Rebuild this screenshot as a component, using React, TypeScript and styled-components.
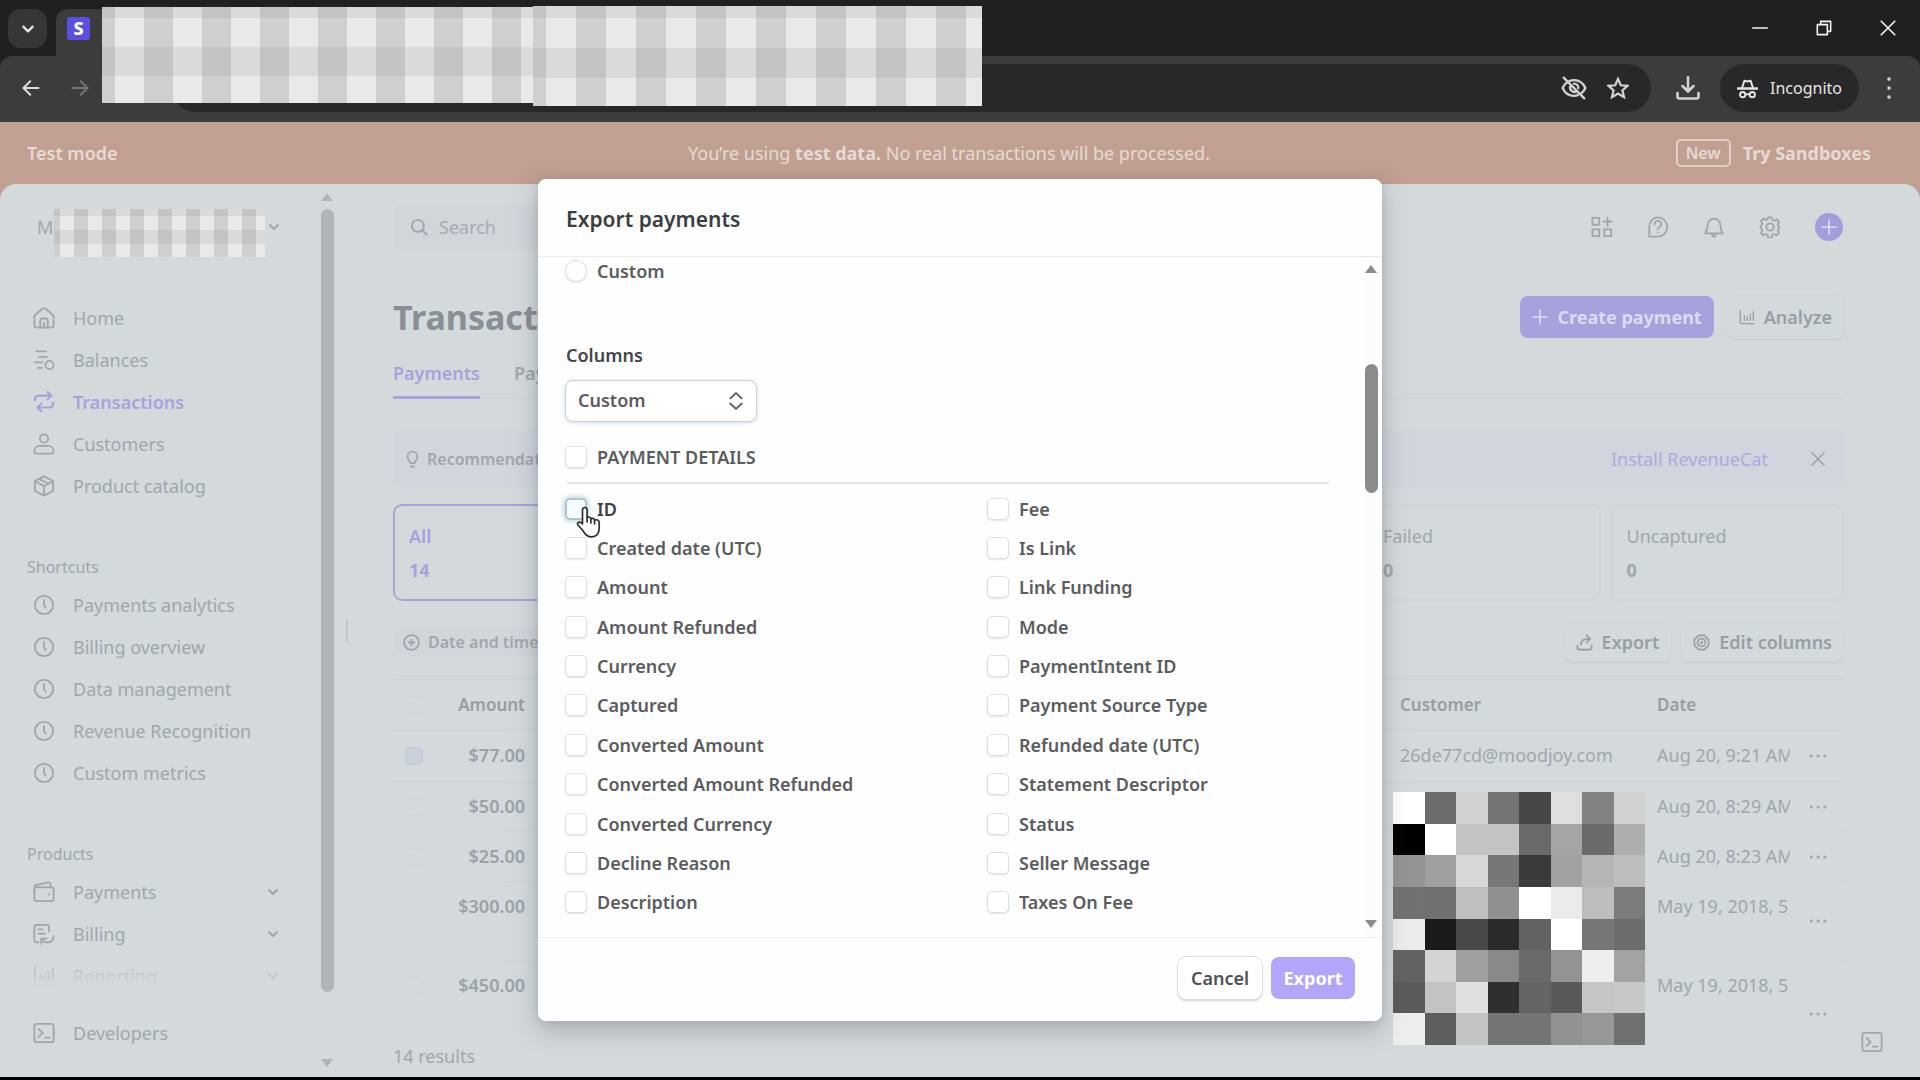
import React from "react";
import styled, { createGlobalStyle, css } from "styled-components";

const GlobalStyle = createGlobalStyle`
  * { box-sizing: border-box; }
  body {
    margin: 0;
    background: #000;
    font-family: "Noto Sans", "Open Sans", "Liberation Sans", sans-serif;
    font-size: 18px;
    color: #a1a6ad;
  }
  button, input, select { font: inherit; color: inherit; }
  button { border: 0; padding: 0; background: none; cursor: pointer; }
  a { color: inherit; text-decoration: none; }
  h1, h2, p, ul { margin: 0; padding: 0; }
  ul { list-style: none; }
`;

/* ---------- icons ---------- */

type IconProps = { size?: number; stroke?: number; children: React.ReactNode };

const Glyph = styled.svg`
  display: block;
  flex: none;
  fill: none;
  stroke: currentColor;
  stroke-linecap: round;
  stroke-linejoin: round;
`;

const Icon = ({ size = 22, stroke = 2, children }: IconProps) => (
  <Glyph width={size} height={size} viewBox="0 0 24 24" strokeWidth={stroke} aria-hidden="true">
    {children}
  </Glyph>
);

const ChevronDown = ({ size = 12, stroke = 4 }) => (
  <Icon size={size} stroke={stroke}><path d="M4 8l8 8 8-8" /></Icon>
);
const HomeIcon = () => (
  <Icon><path d="M1.500 9.500L9.500 2.500a4 4 0 0 1 5 0l8 7V20a2.500 2.500 0 0 1-2.500 2.500H4A2.500 2.500 0 0 1 1.500 20z" /><path d="M8 22v-7a2.500 2.500 0 0 1 2.500-2.500h3A2.500 2.500 0 0 1 16 15v7M12 17v5" /></Icon>
);
const BalancesIcon = () => (
  <Icon><path d="M3 2.500h11M6 8.500h9M2 14.500h8M5 20.500h5" /><circle cx="18" cy="17.500" r="4.500" /></Icon>
);
const TransactionsIcon = () => (
  <Icon stroke={2.4}><path d="M2 10c0-3 1-5 4-5h14M16 1l4 4-4 4M22 13c0 3-1 5-4 5H5M9 14l-4 4 4 4" /></Icon>
);
const CustomerIcon = () => (
  <Icon><circle cx="12" cy="6" r="4.500" /><path d="M1.500 20c0-3.500 2.500-6 6-6h9c3.500 0 6 2.500 6 6 0 1.500-.6 2.500-2 2.500h-17c-1.400 0-2-1-2-2.500z" /></Icon>
);
const CatalogIcon = () => (
  <Icon><path d="M12 1.500l10 5v11l-10 5-10-5v-11zM2.500 7l9.500 5 9.500-5M12 12v10M7 4.500l10 5" /></Icon>
);
const ClockIcon = () => (
  <Icon><circle cx="12" cy="12" r="10" /><path d="M12 6.500v6l2 2.500" /></Icon>
);
const WalletIcon = () => (
  <Icon><path d="M1.500 9a2 2 0 0 1 2-2h17a2 2 0 0 1 2 2v11a2 2 0 0 1-2 2h-17a2 2 0 0 1-2-2zM1.500 9V6.500a2 2 0 0 1 2-2l13-3a2 2 0 0 1 2.500 2V7M17 14.500h1" /></Icon>
);
const BillingIcon = () => (
  <Icon><path d="M6 21H4a2.500 2.500 0 0 1-2.500-2.500v-14A2.500 2.500 0 0 1 4 2h11a2.500 2.500 0 0 1 2.500 2.500V9M6 7h4M6 11.500h7M9 23v-6h6M9.500 17.500C13 23 22 23 22.500 14" /></Icon>
);
const ReportIcon = ({ size = 22 }) => (
  <Icon size={size}><path d="M2 2v18a2 2 0 0 0 2 2h18M8 10v7M12.500 12v5M17 8v9M21.500 4v13" /></Icon>
);
const TerminalIcon = () => (
  <Icon><rect x="1.500" y="2" width="21" height="20" rx="2.500" /><path d="M6 7.500l4.500 4.500L6 16.500M13 17h5" /></Icon>
);
const SearchIcon = () => (
  <Icon size={18} stroke={2.6}><circle cx="10.500" cy="10.500" r="8" /><path d="M16.500 16.500L22 22" /></Icon>
);
const AppsIcon = () => (
  <Icon><rect x="1.500" y="2" width="7.500" height="7.500" /><rect x="1.500" y="14.500" width="7.500" height="7.500" /><rect x="14.500" y="14.500" width="7.500" height="7.500" /><path d="M18 1.500v9M13.500 6h9" /></Icon>
);
const HelpIcon = () => (
  <Icon><path d="M2.500 22.500V12A9.800 9.800 0 0 1 12 1.500c5.500 0 10 4.500 10 10.500s-4.500 10.500-10 10.500z" /><path d="M8.500 9a3.500 3.500 0 1 1 5 3c-1 .5-1.500 1-1.500 2.500M12 18v.2" /></Icon>
);
const BellIcon = () => (
  <Icon><path d="M2.500 19c2-3 2.500-5 2.500-9a7 7 0 0 1 14 0c0 4 .5 6 2.500 9zM9.500 20l2.500 3 2.500-3" /></Icon>
);
const GearIcon = ({ size = 22 }) => (
  <Icon size={size}>
    <path d="M10 1.500h4l.6 2.900 2 .9 2.600-1.500 2.700 2.700-1.500 2.600.8 2 1.300.9-1.300 1.900-.8 2 1.500 2.600-2.700 2.700-2.600-1.500-2 .9-.6 2.900h-4l-.6-2.900-2-.9-2.600 1.500-2.700-2.700 1.500-2.600-.8-2L1.500 12l1.300-1.900.8-2-1.500-2.600 2.700-2.700 2.600 1.500 2-.9z" />
    <circle cx="12" cy="12" r="4" />
  </Icon>
);
const NutIcon = () => (
  <Icon size={17} stroke={2.400}><path d="M8 2h8l3 3 3 3v8l-3 3-3 3H8l-3-3-3-3V8l3-3z" /><circle cx="12" cy="12" r="5.500" /><circle cx="12" cy="12" r="1" /></Icon>
);
const PlusIcon = ({ size = 16, stroke = 2.6 }) => (
  <Icon size={size} stroke={stroke}><path d="M12 1.500v21M1.500 12h21" /></Icon>
);
const PlusCircleIcon = () => (
  <Icon size={17} stroke={2.6}><circle cx="12" cy="12" r="10.500" /><path d="M12 8v8M8 12h8" /></Icon>
);
const BulbIcon = () => (
  <Icon size={17} stroke={2.4}><path d="M9 17c0-3-4-4-4-9a7 7 0 0 1 14 0c0 5-4 6-4 9zM9.500 22h5" /></Icon>
);
const CloseIcon = ({ size = 16, stroke = 2.600 }) => (
  <Icon size={size} stroke={stroke}><path d="M3 3l18 18M21 3L3 21" /></Icon>
);
const ShareIcon = () => (
  <Icon size={17} stroke={2.4}><path d="M2 16v3.500A2.500 2.500 0 0 0 4.500 22h15a2.500 2.500 0 0 0 2.500-2.500V16M7 15c0-6 3-8 13-8M15 2l5 5-5 5" /></Icon>
);
const DotsIcon = () => (
  <Icon size={18} stroke={4}><path d="M3 12h.1M12 12h.1M21 12h.1" /></Icon>
);
const UpDownIcon = () => (
  <Icon size={18} stroke={2.600}><path d="M4.500 8.500L12 1.500l7.500 7M4.500 15.500l7.500 7 7.500-7" /></Icon>
);

/* ---------- browser frame ---------- */

const Screen = styled.div`
  display: flex;
  flex-direction: column;
  height: 100vh;
  padding-bottom: 3px;
  overflow: hidden;
  background: #000;
`;

const Browser = styled.header`
  position: relative;
  flex: none;
  background: #202020;
  color: #e3e3e3;
`;

const TabStrip = styled.div`
  display: flex;
  height: 56px;
`;

const TabMenu = styled.button`
  display: grid;
  place-items: center;
  width: 39px;
  height: 39px;
  margin: 9px 9px 0 8px;
  border-radius: 13px;
  background: #363636;
`;

const ActiveTab = styled.div`
  flex: 0 0 600px;
  height: 47px;
  margin-top: 9px;
  padding: 8px 11px;
  border-radius: 12px 12px 0 0;
  background: #3c3c3c;
`;

const Favicon = styled.span`
  display: grid;
  place-items: center;
  width: 23px;
  height: 23px;
  border-radius: 3px;
  background: #5b4fe0;
  color: #fff;
  font-size: 18px;
  font-weight: 800;
  line-height: 23px;
`;

const WindowButtons = styled.div`
  display: flex;
  margin-left: auto;
`;

const WindowButton = styled.button`
  display: grid;
  place-items: center;
  width: 64px;
  height: 56px;
  color: #f2f2f2;
`;

const Toolbar = styled.div`
  display: flex;
  align-items: center;
  height: 66px;
  padding: 0 19px 2px 18px;
  border-radius: 12px 12px 0 0;
  background: #3c3c3c;
`;

const NavButton = styled.button<{ $dim?: boolean }>`
  display: grid;
  place-items: center;
  width: 26px;
  height: 40px;
  margin-right: 23px;
  color: ${(p) => (p.$dim ? "#747474" : "#dedede")};
`;

const AddressBar = styled.div`
  display: flex;
  flex: 1;
  align-items: center;
  justify-content: flex-end;
  gap: 21px;
  height: 48px;
  margin-left: 56px;
  padding-right: 21px;
  border-radius: 24px;
  background: #282828;
  color: #cfcfcf;
`;

const ToolButton = styled.button`
  display: grid;
  place-items: center;
  width: 24px;
  height: 32px;
  color: #d2d2d2;
`;

const DownloadSlot = styled.div`
  margin: 0 20px 0 25px;
`;

const Incognito = styled.button`
  display: flex;
  align-items: center;
  gap: 12px;
  height: 48px;
  margin-right: 18px;
  padding: 0 17px;
  border-radius: 24px;
  background: #282828;
  color: #e6e6e6;
  font-size: 16px;
`;

const Check = styled.div<{ $left: number; $top: number; $width: number; $height: number; $shift: number; $period: number; $band: number; $rise: number }>`
  position: absolute;
  z-index: 2;
  left: ${(p) => p.$left}px;
  top: ${(p) => p.$top}px;
  width: ${(p) => p.$width}px;
  height: ${(p) => p.$height}px;
  background:
    repeating-linear-gradient(180deg,
      rgba(120, 120, 120, 0.13) 0 ${(p) => p.$band}px,
      transparent ${(p) => p.$band}px ${(p) => p.$band * 2}px) 0 ${(p) => -p.$rise}px / 100% 200px,
    repeating-linear-gradient(90deg,
      #cfcfcf 0 ${(p) => p.$period / 2}px,
      #e9e9e9 ${(p) => p.$period / 2}px ${(p) => p.$period}px) ${(p) => p.$shift}px 0 / ${(p) => p.$period}px 100%;
`;

/* ---------- page ---------- */

const Viewport = styled.div`
  position: relative;
  display: flex;
  flex: 1;
  flex-direction: column;
  min-height: 0;
  background: #c1a092;
`;

const TestBanner = styled.div`
  display: grid;
  grid-template-columns: 1fr auto 1fr;
  align-items: center;
  flex: none;
  height: 62px;
  padding: 0 49px 0 27px;
  color: #e6dad5;
  strong { font-weight: 700; }
`;

const BannerTitle = styled.span`
  font-weight: 600;
`;

const BannerSide = styled.div`
  display: flex;
  align-items: center;
  justify-content: flex-end;
  gap: 12px;
  font-weight: 700;
`;

const NewBadge = styled.span`
  padding: 0 8px;
  border: 2px solid #e0d0ca;
  border-radius: 5px;
  font-size: 16px;
  font-weight: 600;
  line-height: 24px;
`;

const Page = styled.div`
  display: flex;
  flex: 1;
  min-height: 0;
  border-radius: 16px 16px 0 0;
  background: #d4d9dc;
`;

const Sidebar = styled.aside`
  display: flex;
  flex: 0 0 346px;
  padding-right: 12px;
`;

const SideContent = styled.nav`
  flex: 1;
  padding: 22px 38px 22px 27px;
`;

const Account = styled.button`
  display: flex;
  align-items: center;
  justify-content: space-between;
  width: 100%;
  height: 42px;
  margin-bottom: 49px;
  padding: 0 2px 0 10px;
`;

const SideLabel = styled.h2`
  margin-top: 43px;
  font-size: 16px;
  font-weight: 400;
  line-height: 34px;
`;

const SideLink = styled.a<{ $active?: boolean; $faded?: boolean; $gap?: boolean }>`
  display: flex;
  align-items: center;
  gap: 18px;
  height: 42px;
  margin-top: ${(p) => (p.$gap ? 15 : 0)}px;
  padding: 0 3px 0 6px;
  white-space: nowrap;
  ${(p) => p.$active && css`color: #a8a2dc; font-weight: 600;`}
  ${(p) => p.$faded && css`
    opacity: 0.6;
    mask-image: linear-gradient(#000 25%, transparent 75%);
  `}
  > :nth-child(3) { margin-left: auto; }
`;

const ScrollBar = styled.div<{ $tone: string }>`
  display: flex;
  flex: 0 0 14px;
  flex-direction: column;
  align-items: center;
  color: ${(p) => p.$tone};
`;

const ScrollTrack = styled.div`
  flex: 1;
  width: 13px;
  min-height: 0;
`;

const ScrollThumb = styled.div<{ $size: number }>`
  height: ${(p) => p.$size}%;
  border-radius: 7px;
  background: currentColor;
`;

const ScrollSpace = styled.div`
  height: 14%;
`;

const Arrow = styled.svg`
  display: block;
  fill: currentColor;
`;

const ArrowMark = ({ down = false }: { down?: boolean }) => (
  <Arrow width="12" height="8" viewBox="0 0 12 8" aria-hidden="true">
    <path d={down ? "M0 0h12L6 8z" : "M0 8h12L6 0z"} />
  </Arrow>
);

const SideScroll = styled(ScrollBar)`
  padding: 9px 0 10px;
  gap: 8px;
`;

const Handle = styled.div`
  align-self: center;
  flex: none;
  width: 2px;
  height: 22px;
  background: #bfc4c9;
`;

const Main = styled.main`
  display: flex;
  flex: 1;
  flex-direction: column;
  min-width: 0;
  padding: 0 76px 0 45px;
`;

const TopBar = styled.div`
  display: flex;
  align-items: center;
  justify-content: space-between;
  flex: none;
  height: 86px;
`;

const SearchBox = styled.label`
  display: flex;
  align-items: center;
  gap: 11px;
  width: 480px;
  height: 44px;
  padding: 0 17px;
  border-radius: 8px;
  background: #d2d6db;
  input {
    flex: 1;
    padding: 0;
    border: 0;
    outline: 0;
    background: none;
  }
  input::placeholder { color: #a6abb1; opacity: 1; }
`;

const TopActions = styled.div`
  display: flex;
  align-items: center;
  gap: 34px;
  padding-right: 1px;
`;

const AddButton = styled.button`
  display: grid;
  place-items: center;
  width: 28px;
  height: 28px;
  border-radius: 50%;
  background: #a39edb;
  color: #dcdcf2;
`;

const TitleRow = styled.div`
  display: flex;
  align-items: center;
  flex: none;
  gap: 13px;
  height: 44px;
  margin-top: 25px;
  h1 {
    margin-right: auto;
    color: #8a8f95;
    font-size: 34px;
    font-weight: 700;
    line-height: 44px;
  }
`;

const PrimaryButton = styled.button`
  display: flex;
  align-items: center;
  gap: 9px;
  height: 42px;
  padding: 0 12px;
  border-radius: 8px;
  background: #a6a2dd;
  color: #dcdbf0;
  font-weight: 700;
`;

const PlainButton = styled.button<{ $small?: boolean }>`
  display: flex;
  align-items: center;
  gap: 9px;
  height: ${(p) => (p.$small ? 38 : 42)}px;
  padding: 0 12px;
  border-radius: 8px;
  box-shadow: 0 0 0 1px #d1d5d9, 0 2px 2px #c9cdd1;
  color: #999ea5;
  font-weight: 600;
`;

const Tabs = styled.nav`
  display: flex;
  flex: none;
  gap: 34px;
  height: 49px;
  margin-top: 11px;
  box-shadow: inset 0 -1px #cdd2d6;
  font-weight: 600;
`;

const Tab = styled.a<{ $active?: boolean }>`
  border-bottom: 3px solid ${(p) => (p.$active ? "#a8a2dc" : "transparent")};
  color: ${(p) => (p.$active ? "#a8a2dc" : "inherit")};
  line-height: 46px;
`;

const Notice = styled.div`
  display: flex;
  align-items: center;
  flex: none;
  height: 58px;
  margin-top: 31px;
  padding: 0 18px 0 11px;
  gap: 6px;
  border-radius: 8px;
  background: #d1d5dd;
  font-size: 16px;
  font-weight: 600;
  a {
    margin-left: auto;
    padding-right: 36px;
    color: #b0a9dd;
    font-size: 18px;
    font-weight: 400;
  }
`;

const Cards = styled.ul`
  display: grid;
  flex: none;
  grid-template-columns: repeat(6, 1fr);
  gap: 10px;
  margin-top: 16px;
`;

const Card = styled.li<{ $active?: boolean }>`
  height: 97px;
  padding: 13px 14px;
  border: 2px solid ${(p) => (p.$active ? "#a8a4dc" : "#d1d5d9")};
  border-radius: 9px;
  color: ${(p) => (p.$active ? "#a8a2dc" : "inherit")};
  line-height: 34px;
  font-weight: ${(p) => (p.$active ? 600 : 400)};
  strong { display: block; font-weight: 700; }
`;

const FilterRow = styled.div`
  display: flex;
  align-items: center;
  flex: none;
  gap: 10px;
  margin-top: 22px;
`;

const FilterChip = styled.button`
  display: flex;
  align-items: center;
  gap: 8px;
  height: 28px;
  margin-right: auto;
  padding: 0 10px;
  border-radius: 14px;
  background: #d2d6db;
  font-size: 16px;
  font-weight: 600;
`;

const TableArea = styled.div`
  flex: 1;
  min-height: 0;
  margin-top: 18px;
  overflow: hidden;
  border-top: 1px solid #ccd0d4;
`;

const Table = styled.table`
  width: 100%;
  table-layout: fixed;
  border-spacing: 0;
  th, td {
    height: 51px;
    padding: 0;
    border-bottom: 1px solid #cfd3d6;
    line-height: 49px;
    text-align: left;
    vertical-align: top;
    white-space: nowrap;
  }
  th { color: #999da3; font-size: 17px; font-weight: 600; line-height: 50px; }
`;

const Row = styled.tr<{ $height: number }>`
  td { height: ${(p) => p.$height}px; }
`;

const Col = styled.col<{ $width?: number }>`
  width: ${(p) => (p.$width ? p.$width + "px" : "auto")};
`;

const AmountHead = styled.th`
  && { text-align: right; }
`;

const Amount = styled.td`
  && { text-align: right; }
  color: #9ca1a7;
  font-weight: 600;
`;

const DateCell = styled.td`
  overflow: hidden;
`;

const MenuCell = styled.td`
  && { vertical-align: middle; }
  button { display: block; margin: 0 0 0 19px; }
`;

const RowCheck = styled.input<{ $hot?: boolean }>`
  appearance: none;
  display: block;
  width: 18px;
  height: 18px;
  margin: 16px 0 0 12px;
  border: 1px solid ${(p) => (p.$hot ? "#c8cddb" : "#d1d5d9")};
  border-radius: 4px;
  background: ${(p) => (p.$hot ? "#cbd0dc" : "#d5d9dd")};
`;

const Results = styled.p`
  flex: none;
  height: 42px;
  line-height: 42px;
`;

const Mosaic = styled.div`
  position: absolute;
  right: 275px;
  bottom: 32px;
  display: grid;
  grid-template-columns: repeat(8, 1fr);
  grid-template-rows: repeat(8, 1fr);
  width: 252px;
  height: 253px;
`;

const Tile = styled.i<{ $shade: string }>`
  background: #${(p) => p.$shade};
`;

const Console = styled.button`
  position: absolute;
  right: 37px;
  bottom: 24px;
`;

/* ---------- dialog ---------- */

const Overlay = styled.div`
  position: absolute;
  inset: 0;
  display: flex;
  justify-content: center;
  padding: 57px 24px 56px;
`;

const Dialog = styled.section`
  display: flex;
  flex-direction: column;
  width: 844px;
  border-radius: 8px;
  background: #fefefe;
  box-shadow: 0 10px 26px rgba(70, 75, 90, 0.3), 0 0 8px rgba(70, 75, 90, 0.15);
  color: #5b5c60;
  font-weight: 600;
`;

const DialogHead = styled.header`
  flex: none;
  height: 78px;
  padding: 0 28px;
  border-bottom: 1px solid #ebebed;
  h2 {
    color: #3c3d41;
    font-size: 21px;
    font-weight: 600;
    line-height: 80px;
  }
`;

const DialogBody = styled.div`
  display: flex;
  flex: 1;
  min-height: 0;
`;

const Form = styled.form`
  display: flex;
  flex: 1;
  flex-direction: column;
  padding: 3px 35px 15px 27px;
`;

const Choice = styled.label<{ $hover?: boolean }>`
  position: relative;
  display: flex;
  align-items: center;
  gap: 10px;
  color: ${(p) => (p.$hover ? "#3f4044" : "inherit")};
  line-height: 22px;
`;

const Box = styled.input<{ $focus?: boolean }>`
  appearance: none;
  flex: none;
  width: 22px;
  height: 22px;
  margin: 0;
  border: 1px solid #dedfe2;
  border-radius: ${(p) => (p.type === "radio" ? "50%" : "5px")};
  background: #fff;
  box-shadow: 0 1px 2px #e4e5e8;
  ${(p) => p.$focus && css`
    border: 2px solid #b3c4cc;
    background: #f5fcff;
    box-shadow: 0 0 4px 2px #c5dbe6;
  `}
`;

const FieldLabel = styled.label`
  margin: 61px 0 13px 1px;
  color: #444549;
  line-height: 24px;
`;

const SelectWrap = styled.div`
  position: relative;
  width: 192px;
  margin-bottom: 24px;
  svg { position: absolute; right: 12px; top: 12px; pointer-events: none; }
`;

const Select = styled.select`
  appearance: none;
  display: block;
  width: 100%;
  height: 42px;
  padding: 0 12px 2px;
  border: 1px solid #cbd0d4;
  border-radius: 8px;
  background: #fff;
  box-shadow: 0 1px 4px #cfdfe8;
`;

const Divider = styled.hr`
  align-self: stretch;
  margin: 14px 0 5px 2px;
  border: 0;
  border-top: 2px solid #e6e6e8;
`;

const ColumnGrid = styled.div`
  display: grid;
  flex: 1;
  grid-template-columns: 422px 1fr;
  grid-template-rows: repeat(11, 1fr);
  grid-auto-flow: column;
`;

const Pointer = styled.svg`
  position: absolute;
  z-index: 3;
  left: 11px;
  top: 16px;
`;

const DialogScroll = styled(ScrollBar)`
  margin-right: 4px;
  padding: 8px 0 9px;
  background: #fcfcfc;
`;

const DialogFoot = styled.footer`
  display: flex;
  flex: none;
  align-items: center;
  justify-content: flex-end;
  gap: 9px;
  height: 84px;
  padding: 0 27px 3px;
  border-top: 1px solid #ebebed;
`;

const FootButton = styled.button<{ $primary?: boolean }>`
  min-width: 84px;
  height: 42px;
  border-radius: 8px;
  ${(p) => p.$primary
    ? css`background: #b1a6fa; color: #fff; font-weight: 700;`
    : css`background: #fff; box-shadow: 0 0 0 1px #dcdde1, 0 2px 2px #d2d3d8; color: #505156;`}
`;

/* ---------- data ---------- */

const mainLinks = [
  { label: "Home", icon: <HomeIcon /> },
  { label: "Balances", icon: <BalancesIcon /> },
  { label: "Transactions", icon: <TransactionsIcon />, active: true },
  { label: "Customers", icon: <CustomerIcon /> },
  { label: "Product catalog", icon: <CatalogIcon /> },
];
const shortcuts = ["Payments analytics", "Billing overview", "Data management", "Revenue Recognition", "Custom metrics"];
const products = [
  { label: "Payments", icon: <WalletIcon /> },
  { label: "Billing", icon: <BillingIcon /> },
  { label: "Reporting", icon: <ReportIcon />, faded: true },
];
const payments = [
  { amount: "$77.00", customer: "26de77cd@moodjoy.com", date: "Aug 20, 9:21 AM", height: 51 },
  { amount: "$50.00", customer: "", date: "Aug 20, 8:29 AM", height: 50 },
  { amount: "$25.00", customer: "", date: "Aug 20, 8:23 AM", height: 50 },
  { amount: "$300.00", customer: "", date: "May 19, 2018, 5", height: 79 },
  { amount: "$450.00", customer: "", date: "May 19, 2018, 5", height: 107 },
];
const columns = [
  "ID", "Created date (UTC)", "Amount", "Amount Refunded", "Currency", "Captured", "Converted Amount",
  "Converted Amount Refunded", "Converted Currency", "Decline Reason", "Description",
  "Fee", "Is Link", "Link Funding", "Mode", "PaymentIntent ID", "Payment Source Type",
  "Refunded date (UTC)", "Statement Descriptor", "Status", "Seller Message", "Taxes On Fee",
];
const tiles = [
  "fff 6c6c6c d1d1d1 747474 474747 dedede 828282 d1d1d1",
  "000 fff c4c4c4 c4c4c4 696969 a5a5a5 6b6b6b aeaeae",
  "949494 a0a0a0 d8d8d8 777 3a3a3a a1a1a1 b5b5b5 bdbdbd",
  "727272 707070 bfbfbf 909090 fff ebebeb bdbdbd 7b7b7b",
  "ececec 1b1b1b 484848 2a2a2a 626262 fff 767676 6d6d6d",
  "636363 d4d4d4 a0a0a0 898989 696969 939393 eee a3a3a3",
  "5b5b5b c3c3c3 e0e0e0 2f2f2f 646464 595959 c5c5c5 c8c8c8",
  "eee 5e5e5e c3c3c3 747474 747474 929292 979797 707070",
].join(" ").split(" ");

export default function App() {
  return (
    <Screen>
      <GlobalStyle />
      <Browser>
        <TabStrip>
          <TabMenu aria-label="Search tabs"><ChevronDown size={14} /></TabMenu>
          <ActiveTab><Favicon>S</Favicon></ActiveTab>
          <WindowButtons>
            <WindowButton aria-label="Minimize"><Icon size={16}><path d="M1 12h22" /></Icon></WindowButton>
            <WindowButton aria-label="Restore">
              <Icon size={16} stroke={2.4}><path d="M2 7h15v15H2zM7 6V2h15v15h-4" /></Icon>
            </WindowButton>
            <WindowButton aria-label="Close"><CloseIcon size={18} stroke={2.2} /></WindowButton>
          </WindowButtons>
        </TabStrip>
        <Toolbar>
          <NavButton aria-label="Back"><Icon size={18} stroke={2.6}><path d="M22 12H3M11 3l-9 9 9 9" /></Icon></NavButton>
          <NavButton $dim aria-label="Forward"><Icon size={18} stroke={2.6}><path d="M2 12h19M13 3l9 9-9 9" /></Icon></NavButton>
          <AddressBar>
            <ToolButton aria-label="Third-party cookies blocked">
              <Icon size={26} stroke={2.2}>
                <path d="M8 5.500C9.200 5 10.600 4.700 12 4.700c4.700 0 8.500 2.800 10.500 7.300-.8 1.800-1.900 3.300-3.300 4.500M15.500 18.600c-1.100.4-2.300.7-3.500.7-4.700 0-8.500-2.800-10.500-7.300C2.300 10.100 3.500 8.500 5 7.300M2.500 2.500l19 19M9 9.500a4 4 0 0 0 5.500 5.500M12 8a4 4 0 0 1 4 4" />
              </Icon>
            </ToolButton>
            <ToolButton aria-label="Bookmark this page">
              <Icon size={22} stroke={2.4}><path d="M12 2l3 7 7.500.6-5.700 5 1.800 7.400L12 18l-6.600 4 1.800-7.400-5.700-5L9 9z" strokeLinejoin="miter" /></Icon>
            </ToolButton>
          </AddressBar>
          <DownloadSlot>
            <ToolButton aria-label="Downloads">
              <Icon size={24} stroke={2.6}><path d="M12 1v14M6.500 10l5.500 5.500 5.500-5.500M1.500 17v3.500a2 2 0 0 0 2 2h17a2 2 0 0 0 2-2V17" /></Icon>
            </ToolButton>
          </DownloadSlot>
          <Incognito>
            <Icon size={21} stroke={2.2}>
              <path d="M1 12h22" strokeWidth="2.800" />
              <path d="M6 10.500L8.500 3l3.500 1 3.500-1L18 10.500" />
              <circle cx="6.500" cy="19" r="3" /><circle cx="17.500" cy="19" r="3" /><path d="M10 18.500h4" />
            </Icon>
            Incognito
          </Incognito>
          <ToolButton aria-label="Browser menu"><Icon size={24} stroke={3.6}><path d="M12 3v.1M12 12v.1M12 21v.1" /></Icon></ToolButton>
        </Toolbar>
        <Check $left={102} $top={7} $width={431} $height={96} $shift={42} $period={58} $band={29} $rise={18} />
        <Check $left={533} $top={6} $width={449} $height={100} $shift={43} $period={60} $band={30} $rise={18} />
      </Browser>

      <Viewport>
        <TestBanner>
          <BannerTitle>Test mode</BannerTitle>
          <span>You’re using <strong>test data.</strong> No real transactions will be processed.</span>
          <BannerSide><NewBadge>New</NewBadge><a href="#sandboxes">Try Sandboxes</a></BannerSide>
        </TestBanner>

        <Page>
          <Sidebar>
            <SideContent>
              <Account>M<ChevronDown /></Account>
              {mainLinks.map((l) => (
                <SideLink key={l.label} href="#" $active={l.active}>{l.icon}<span>{l.label}</span></SideLink>
              ))}
              <SideLabel>Shortcuts</SideLabel>
              {shortcuts.map((l) => (
                <SideLink key={l} href="#"><ClockIcon /><span>{l}</span></SideLink>
              ))}
              <SideLabel>Products</SideLabel>
              {products.map((l) => (
                <SideLink key={l.label} href="#" $faded={l.faded}>{l.icon}<span>{l.label}</span><ChevronDown /></SideLink>
              ))}
              <SideLink href="#" $gap><TerminalIcon /><span>Developers</span></SideLink>
            </SideContent>
            <SideScroll $tone="#b0b5b9">
              <ArrowMark />
              <ScrollTrack><ScrollThumb $size={93} /></ScrollTrack>
              <ArrowMark down />
            </SideScroll>
          </Sidebar>
          <Handle />
          <Main>
            <TopBar>
              <SearchBox><SearchIcon /><input type="search" placeholder="Search" aria-label="Search" /></SearchBox>
              <TopActions>
                <button aria-label="Apps"><AppsIcon /></button>
                <button aria-label="Help"><HelpIcon /></button>
                <button aria-label="Notifications"><BellIcon /></button>
                <button aria-label="Settings"><GearIcon /></button>
                <AddButton aria-label="Create"><PlusIcon size={16} /></AddButton>
              </TopActions>
            </TopBar>
            <TitleRow>
              <h1>Transactions</h1>
              <PrimaryButton><PlusIcon />Create payment</PrimaryButton>
              <PlainButton><ReportIcon size={16} />Analyze</PlainButton>
            </TitleRow>
            <Tabs>
              <Tab href="#payments" $active>Payments</Tab>
              <Tab href="#payouts">Payouts</Tab>
            </Tabs>
            <Notice>
              <BulbIcon />Recommendation
              <a href="#revenuecat">Install RevenueCat</a>
              <button aria-label="Dismiss"><CloseIcon /></button>
            </Notice>
            <Cards>
              <Card $active>All<strong>14</strong></Card>
              <Card /><Card /><Card />
              <Card>Failed<strong>0</strong></Card>
              <Card>Uncaptured<strong>0</strong></Card>
            </Cards>
            <FilterRow>
              <FilterChip><PlusCircleIcon />Date and time</FilterChip>
              <PlainButton $small><ShareIcon />Export</PlainButton>
              <PlainButton $small><NutIcon />Edit columns</PlainButton>
            </FilterRow>
            <TableArea>
              <Table>
                <colgroup>
                  <Col $width={50} /><Col $width={82} /><Col /><Col $width={257} /><Col $width={133} /><Col $width={54} />
                </colgroup>
                <thead>
                  <tr>
                    <th><RowCheck type="checkbox" aria-label="Select all" /></th>
                    <AmountHead>Amount</AmountHead><th /><th>Customer</th><th>Date</th><th />
                  </tr>
                </thead>
                <tbody>
                  {payments.map((p, i) => (
                    <Row key={p.amount} $height={p.height}>
                      <td><RowCheck type="checkbox" $hot={i === 0} aria-label={`Select ${p.amount}`} /></td>
                      <Amount>{p.amount}</Amount>
                      <td />
                      <td>{p.customer}</td>
                      <DateCell>{p.date}</DateCell>
                      <MenuCell><button aria-label="More"><DotsIcon /></button></MenuCell>
                    </Row>
                  ))}
                </tbody>
              </Table>
            </TableArea>
            <Results>14 results</Results>
          </Main>
        </Page>

        <Check $left={54} $top={87} $width={211} $height={48} $shift={20} $period={28} $band={14} $rise={7} />
        <Mosaic>{tiles.map((t, i) => <Tile key={i} $shade={t} />)}</Mosaic>
        <Console aria-label="Open console"><TerminalIcon /></Console>

        <Overlay>
          <Dialog role="dialog" aria-labelledby="export-title">
            <DialogHead><h2 id="export-title">Export payments</h2></DialogHead>
            <DialogBody>
              <Form>
                <Choice><Box type="radio" name="range" />Custom</Choice>
                <FieldLabel htmlFor="columns">Columns</FieldLabel>
                <SelectWrap>
                  <Select id="columns" defaultValue="Custom"><option>Custom</option></Select>
                  <UpDownIcon />
                </SelectWrap>
                <Choice><Box type="checkbox" />PAYMENT DETAILS</Choice>
                <Divider />
                <ColumnGrid>
                  {columns.map((c, i) => (
                    <Choice key={c} $hover={i === 0}>
                      <Box type="checkbox" $focus={i === 0} />{c}
                      {i === 0 && (
                        <Pointer width="26" height="34" viewBox="0 0 28 36" aria-hidden="true">
                          <path
                            d="M8 3c2-1.500 4 0 4 2v8c2-1 4 0 4 1.500 2-1 4 0 4 1.500 2-1 5 0 5 2.500V25c0 5-3 9-8 9s-7-2-9-6l-6-7c-1-2 1-4 4-2l1 1V5c0-1 .3-1.600 1-2z"
                            fill="#fff" stroke="#2b2c30" strokeWidth="1.800" strokeLinejoin="round"
                          />
                          <path d="M12 13v5M16 15v4M20 16v4" stroke="#2b2c30" strokeWidth="1.800" strokeLinecap="round" />
                        </Pointer>
                      )}
                    </Choice>
                  ))}
                </ColumnGrid>
              </Form>
              <DialogScroll $tone="#8b8b8b">
                <ArrowMark />
                <ScrollTrack>
                  <ScrollSpace />
                  <ScrollThumb $size={20} />
                </ScrollTrack>
                <ArrowMark down />
              </DialogScroll>
            </DialogBody>
            <DialogFoot>
              <FootButton>Cancel</FootButton>
              <FootButton $primary>Export</FootButton>
            </DialogFoot>
          </Dialog>
        </Overlay>
      </Viewport>
    </Screen>
  );
}
